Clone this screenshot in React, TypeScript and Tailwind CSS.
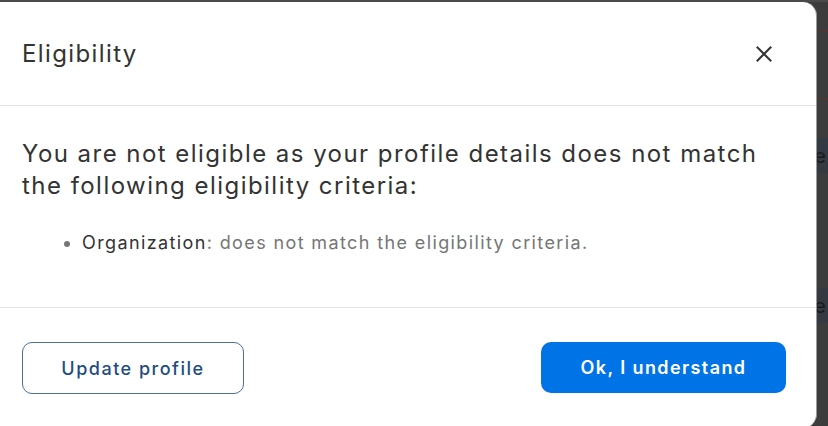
function BackdropPage() {
  return (
    <div className="flex h-[426px] w-[828px] flex-col bg-[#3c3c3c] tracking-normal">
      <div className="h-[2px] bg-[#4a4a4a]" />
      <div className="h-[29px]" />
      <div className="border-t border-dashed border-[#6e2c24]" />
      <div className="h-[66px]" />
      <div className="border-t border-dashed border-[#6e2c24]" />
      <div className="h-[39px]" />
      <div className="flex h-[35px] items-center justify-end bg-[#343a41] pr-[2px] text-[20px] leading-[24px] text-[#1b1b1b]">
        <span>e</span>
      </div>
      <div className="h-[115px]" />
      <div className="flex h-[35px] items-center justify-end bg-[#343a41] pr-[2px] text-[20px] leading-[24px] text-[#1b1b1b]">
        <span>e</span>
      </div>
    </div>
  );
}

export default function App() {
  return (
    <div className="relative h-[426px] w-[828px] overflow-hidden font-['Inter','Liberation_Sans',sans-serif] tracking-[1.38px]">
      <BackdropPage />

      {/* Eligibility dialog */}
      <div className="absolute left-0 top-[2px] flex h-[426px] w-[817px] flex-col rounded-r-[14px] border-r border-[#9a9a9a] bg-white">
        <div className="flex h-[103px] items-center justify-between pl-[22px] pr-[44px]">
          <h2 className="text-[24px] leading-[32px] text-[#333333]">Eligibility</h2>
          <button type="button" aria-label="Close" className="text-[#333333]">
            <svg width="16" height="16" viewBox="0 0 16 16" fill="none" stroke="currentColor" strokeWidth="2" strokeLinecap="square">
              <path d="M1.5 1.5 14.5 14.5M14.5 1.5 1.5 14.5" />
            </svg>
          </button>
        </div>

        <div className="border-t border-[#e3e3e3] px-[22px] pb-[50px] pt-[32px]">
          <p className="text-[24px] leading-[32px] tracking-[1.46px] text-[#333333]">
            You are not eligible as your profile details does not match the following eligibility criteria:
          </p>
          <ul className="mt-[27px] list-disc pl-[60px] text-[18px] leading-[28px] marker:text-[#777777]">
            <li>
              <span className="text-[#333333]">Organization</span>
              <span className="text-[#767676]">: does not match the eligibility criteria.</span>
            </li>
          </ul>
        </div>

        <div className="flex flex-1 items-start justify-between border-t border-[#e3e3e3] pl-[22px] pr-[30px] pt-[34px]">
          <button
            type="button"
            className="h-[52px] w-[222px] rounded-[10px] border border-[#4b6e9c] text-[18px] font-medium tracking-[1.5px] text-[#1f4c84]"
          >
            Update profile
          </button>
          <button
            type="button"
            className="h-[51px] w-[245px] rounded-[10px] bg-[#0073e6] text-[18px] font-semibold tracking-[1.4px] text-white"
          >
            Ok, I understand
          </button>
        </div>
      </div>
    </div>
  );
}
